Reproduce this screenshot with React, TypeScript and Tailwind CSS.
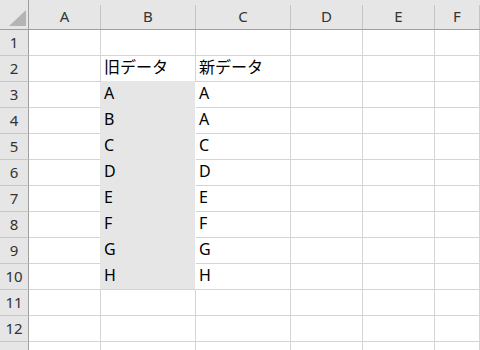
import React from "react";

const cols = ["A", "B", "C", "D", "E", "F"];
const oldData = ["A", "B", "C", "D", "E", "F", "G", "H"];
const newData = ["A", "A", "C", "D", "E", "F", "G", "H"];

function cellText(row: number, col: string) {
  if (row === 2 && col === "B") return "旧データ";
  if (row === 2 && col === "C") return "新データ";
  if (row >= 3 && row <= 10) {
    if (col === "B") return oldData[row - 3];
    if (col === "C") return newData[row - 3];
  }
  return "";
}

function isFilled(row: number, col: string) {
  return col === "B" && row >= 3 && row <= 10;
}

export default function App() {
  const rows = Array.from({ length: 13 }, (_, i) => i + 1);

  return (
    <div className="h-[350px] w-[480px] overflow-hidden bg-white font-['Noto_Sans','Noto_Sans_CJK_JP',sans-serif]">
      <div className="grid grid-cols-[29px_72px_95px_95px_72px_72px_1fr]">
        <div className="flex h-[30px] items-end justify-end border-r border-b border-r-[#9f9f9f] border-b-[#9f9f9f] bg-[#e6e6e6] pr-[2px] pb-[3px]">
          <svg width="17" height="16" viewBox="0 0 17 16">
            <polygon points="17,0 17,16 0,16" fill="#b4b4b4" />
          </svg>
        </div>
        {cols.map((c) => (
          <div key={c} className="h-[30px] border-b border-[#9f9f9f] bg-[#e6e6e6] pt-[5px]">
            <div className="flex h-full items-center justify-center border-r border-[#c4c4c4] pb-[2px] text-[15px] leading-none text-[#333]">
              {c}
            </div>
          </div>
        ))}

        {rows.map((r) => (
          <React.Fragment key={r}>
            <div className="flex h-[26px] items-center justify-center border-r border-b border-r-[#9f9f9f] border-b-[#c8c8c8] bg-[#e6e6e6] text-[15px] leading-none text-[#333]">
              {r}
            </div>
            {cols.map((c) => {
              const filled = isFilled(r, c);
              const nextFilled = isFilled(r + 1, c);
              const leftOfFill = c === "A" && r >= 3 && r <= 10;
              return (
                <div
                  key={c}
                  className={`flex h-[26px] items-end border-r border-b pb-[5px] pl-[3px] text-[16px] leading-[18px] whitespace-nowrap text-black ${
                    filled ? "bg-[#e7e6e6] border-r-white" : leftOfFill ? "border-r-[#e7e6e6]" : "border-r-[#d4d4d4]"
                  } ${filled && r < 10 ? "border-b-[#e7e6e6]" : nextFilled ? "border-b-[#e7e6e6]" : "border-b-[#d4d4d4]"}`}
                >
                  {cellText(r, c)}
                </div>
              );
            })}
          </React.Fragment>
        ))}
      </div>
    </div>
  );
}
